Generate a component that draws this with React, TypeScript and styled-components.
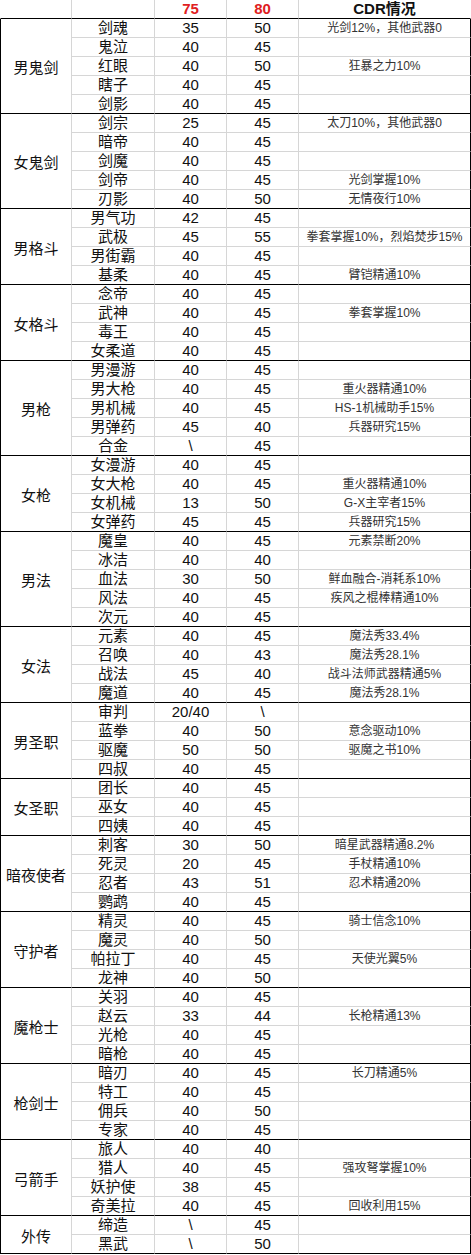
import React from "react";
import styled, { createGlobalStyle } from "styled-components";

type TRow = [string, string, string, string?];
type TGroup = { title: string; rows: TRow[] };

const groups: TGroup[] = [
  {
    title: "男鬼剑",
    rows: [
      ["剑魂", "35", "50", "光剑12%，其他武器0"],
      ["鬼泣", "40", "45"],
      ["红眼", "40", "50", "狂暴之力10%"],
      ["瞎子", "40", "45"],
      ["剑影", "40", "45"],
    ],
  },
  {
    title: "女鬼剑",
    rows: [
      ["剑宗", "25", "45", "太刀10%，其他武器0"],
      ["暗帝", "40", "45"],
      ["剑魔", "40", "45"],
      ["剑帝", "40", "45", "光剑掌握10%"],
      ["刃影", "40", "50", "无情夜行10%"],
    ],
  },
  {
    title: "男格斗",
    rows: [
      ["男气功", "42", "45"],
      ["武极", "45", "55", "拳套掌握10%，烈焰焚步15%"],
      ["男街霸", "40", "45"],
      ["基柔", "40", "45", "臂铠精通10%"],
    ],
  },
  {
    title: "女格斗",
    rows: [
      ["念帝", "40", "45"],
      ["武神", "40", "45", "拳套掌握10%"],
      ["毒王", "40", "45"],
      ["女柔道", "40", "45"],
    ],
  },
  {
    title: "男枪",
    rows: [
      ["男漫游", "40", "45"],
      ["男大枪", "40", "45", "重火器精通10%"],
      ["男机械", "40", "45", "HS-1机械助手15%"],
      ["男弹药", "45", "40", "兵器研究15%"],
      ["合金", "\\", "45"],
    ],
  },
  {
    title: "女枪",
    rows: [
      ["女漫游", "40", "45"],
      ["女大枪", "40", "45", "重火器精通10%"],
      ["女机械", "13", "50", "G-X主宰者15%"],
      ["女弹药", "45", "45", "兵器研究15%"],
    ],
  },
  {
    title: "男法",
    rows: [
      ["魔皇", "40", "45", "元素禁断20%"],
      ["冰洁", "40", "40"],
      ["血法", "30", "50", "鲜血融合-消耗系10%"],
      ["风法", "40", "45", "疾风之棍棒精通10%"],
      ["次元", "40", "45"],
    ],
  },
  {
    title: "女法",
    rows: [
      ["元素", "40", "45", "魔法秀33.4%"],
      ["召唤", "40", "43", "魔法秀28.1%"],
      ["战法", "45", "40", "战斗法师武器精通5%"],
      ["魔道", "40", "45", "魔法秀28.1%"],
    ],
  },
  {
    title: "男圣职",
    rows: [
      ["审判", "20/40", "\\"],
      ["蓝拳", "40", "50", "意念驱动10%"],
      ["驱魔", "50", "50", "驱魔之书10%"],
      ["四叔", "40", "45"],
    ],
  },
  {
    title: "女圣职",
    rows: [
      ["团长", "40", "45"],
      ["巫女", "40", "45"],
      ["四姨", "40", "45"],
    ],
  },
  {
    title: "暗夜使者",
    rows: [
      ["刺客", "30", "50", "暗星武器精通8.2%"],
      ["死灵", "20", "45", "手杖精通10%"],
      ["忍者", "43", "51", "忍术精通20%"],
      ["鹦鹉", "40", "45"],
    ],
  },
  {
    title: "守护者",
    rows: [
      ["精灵", "40", "45", "骑士信念10%"],
      ["魔灵", "40", "50"],
      ["帕拉丁", "40", "45", "天使光翼5%"],
      ["龙神", "40", "50"],
    ],
  },
  {
    title: "魔枪士",
    rows: [
      ["关羽", "40", "45"],
      ["赵云", "33", "44", "长枪精通13%"],
      ["光枪", "40", "45"],
      ["暗枪", "40", "45"],
    ],
  },
  {
    title: "枪剑士",
    rows: [
      ["暗刃", "40", "45", "长刀精通5%"],
      ["特工", "40", "45"],
      ["佣兵", "40", "50"],
      ["专家", "40", "45"],
    ],
  },
  {
    title: "弓箭手",
    rows: [
      ["旅人", "40", "40"],
      ["猎人", "40", "45", "强攻弩掌握10%"],
      ["妖护使", "38", "45"],
      ["奇美拉", "40", "45", "回收利用15%"],
    ],
  },
  {
    title: "外传",
    rows: [
      ["缔造", "\\", "45"],
      ["黑武", "\\", "50"],
    ],
  },
];

const GlobalStyle = createGlobalStyle`
  html, body {
    margin: 0;
    padding: 0;
    background: #fff;
  }
  body {
    font-family: "Liberation Sans", "Noto Sans CJK SC", sans-serif;
    color: #111;
  }
`;

const Sheet = styled.table`
  border-collapse: separate;
  border-spacing: 0;
  table-layout: fixed;
  width: 471px;
`;

const grid = `#d6d6d6`;

const HeadCell = styled.th<{ $w: number; $red?: boolean; $first?: boolean }>`
  box-sizing: border-box;
  width: ${(p) => p.$w}px;
  padding: 0;
  line-height: 18px;
  font-size: 15px;
  font-weight: bold;
  text-align: center;
  color: ${(p) => (p.$red ? `#e0201e` : `#111`)};
  border-left: ${(p) => (p.$first ? `1px solid transparent` : `0`)};
  border-right: 1px solid ${grid};
  border-bottom: 1px solid #000;
  &:last-child {
    border-right-color: transparent;
  }
`;

const GroupCell = styled.td`
  padding: 0;
  font-size: 15px;
  text-align: center;
  vertical-align: middle;
  border-left: 1px solid #000;
  border-right: 1px solid ${grid};
  border-bottom: 1px solid #000;
  padding-top: 1px;
`;

const Cell = styled.td<{ $end: boolean; $note?: boolean }>`
  padding: 0;
  line-height: 18px;
  height: 18px;
  font-size: ${(p) => (p.$note ? `12px` : `15px`)};
  color: ${(p) => (p.$note ? `#333` : `#111`)};
  text-align: center;
  white-space: nowrap;
  overflow: hidden;
  border-right: 1px solid ${grid};
  border-bottom: 1px solid ${(p) => (p.$end ? `#000` : grid)};
  &:last-child {
    border-right-color: #000;
  }
`;

export default function App() {
  return (
    <>
      <GlobalStyle />
      <Sheet>
        <thead>
          <tr>
            <HeadCell $w={72} $first></HeadCell>
            <HeadCell $w={83}></HeadCell>
            <HeadCell $w={72} $red>
              75
            </HeadCell>
            <HeadCell $w={72} $red>
              80
            </HeadCell>
            <HeadCell $w={172}>CDR情况</HeadCell>
          </tr>
        </thead>
        <tbody>
          {groups.map((g) =>
            g.rows.map((r, i) => {
              const end = i === g.rows.length - 1;
              return (
                <tr key={g.title + r[0]}>
                  {i === 0 && (
                    <GroupCell rowSpan={g.rows.length}>{g.title}</GroupCell>
                  )}
                  <Cell $end={end}>{r[0]}</Cell>
                  <Cell $end={end}>{r[1]}</Cell>
                  <Cell $end={end}>{r[2]}</Cell>
                  <Cell $end={end} $note>
                    {r[3] ?? ""}
                  </Cell>
                </tr>
              );
            })
          )}
        </tbody>
      </Sheet>
    </>
  );
}
